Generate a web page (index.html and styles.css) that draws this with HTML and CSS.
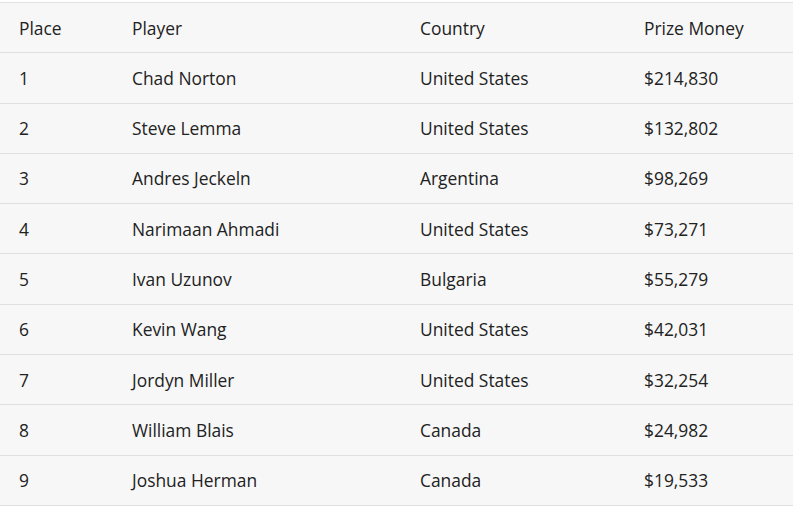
FILE: index.html
```html
<!DOCTYPE html>
<html lang="en">
<head>
<meta charset="utf-8">
<title>Results</title>
<link rel="stylesheet" href="styles.css">
</head>
<body>
<table class="results">
  <colgroup>
    <col class="c-place">
    <col class="c-player">
    <col class="c-country">
    <col class="c-prize">
  </colgroup>
  <thead>
    <tr><th>Place</th><th>Player</th><th>Country</th><th>Prize Money</th></tr>
  </thead>
  <tbody>
    <tr><td>1</td><td>Chad Norton</td><td>United States</td><td>$214,830</td></tr>
    <tr><td>2</td><td>Steve Lemma</td><td>United States</td><td>$132,802</td></tr>
    <tr><td>3</td><td>Andres Jeckeln</td><td>Argentina</td><td>$98,269</td></tr>
    <tr><td>4</td><td>Narimaan Ahmadi</td><td>United States</td><td>$73,271</td></tr>
    <tr><td>5</td><td>Ivan Uzunov</td><td>Bulgaria</td><td>$55,279</td></tr>
    <tr><td>6</td><td>Kevin Wang</td><td>United States</td><td>$42,031</td></tr>
    <tr><td>7</td><td>Jordyn Miller</td><td>United States</td><td>$32,254</td></tr>
    <tr><td>8</td><td>William Blais</td><td>Canada</td><td>$24,982</td></tr>
    <tr><td>9</td><td>Joshua Herman</td><td>Canada</td><td>$19,533</td></tr>
  </tbody>
</table>
</body>
</html>
```
FILE: styles.css
```css
html, body {
  margin: 0;
  padding: 0;
  background: #ffffff;
}
body {
  padding-top: 2px;
  font-family: "Open Sans", "Liberation Sans", sans-serif;
  color: #222222;
}
.results {
  width: 793px;
  border-collapse: collapse;
  table-layout: fixed;
  background: #f7f7f7;
  border-top: 1px solid #e2e2e2;
}
.c-place { width: 113px; }
.c-player { width: 288px; }
.c-country { width: 224px; }
.c-prize { width: 168px; }
.results th,
.results td {
  text-align: left;
  font-weight: 400;
  font-size: 17.4px;
  line-height: 24px;
  padding: 12.65px 0 12.65px 19px;
  border-bottom: 1px solid #e0e0e0;
  white-space: nowrap;
}
```
